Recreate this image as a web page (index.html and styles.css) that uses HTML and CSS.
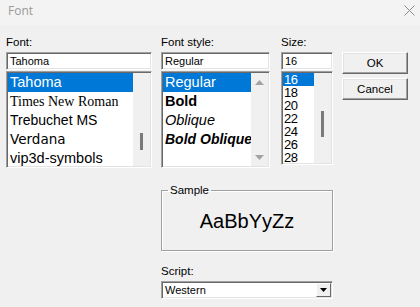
FILE: index.html
```html
<!DOCTYPE html>
<html lang="en">
<head>
  <meta charset="UTF-8" />
  <title>Font</title>
  <link rel="stylesheet" href="styles.css">
</head>
<body>
  <div class="titlebar">
    <span class="title">Font</span>
    <svg class="close" width="11" height="11" viewBox="0 0 11 11">
      <path d="M0.5 0.5 L10.5 10.5 M10.5 0.5 L0.5 10.5" stroke="#8c8c8c" stroke-width="1" fill="none" />
    </svg>
  </div>

  <div class="dialog">
    <div class="top">
      <div class="col col-font">
        <div class="label">Font:</div>
        <div class="edit sunken">Tahoma</div>
        <div class="list sunken">
          <ul class="items">
            <li class="sel f-tahoma">Tahoma</li>
            <li class="f-times">Times New Roman</li>
            <li class="f-trebuchet">Trebuchet MS</li>
            <li class="f-verdana">Verdana</li>
            <li class="f-tahoma">vip3d-symbols</li>
          </ul>
          <div class="scroll">
            <div class="thumb thumb-font"></div>
          </div>
        </div>
      </div>

      <div class="col col-style">
        <div class="label">Font style:</div>
        <div class="edit sunken">Regular</div>
        <div class="list sunken">
          <ul class="items style-items">
            <li class="sel">Regular</li>
            <li class="bold">Bold</li>
            <li class="oblique">Oblique</li>
            <li class="bold oblique">Bold Oblique</li>
          </ul>
          <div class="scroll scroll-arrows">
            <svg width="9" height="5" viewBox="0 0 9 5"><path d="M0 5 L4.5 0 L9 5 Z" fill="#a3a3a3" /></svg>
            <svg width="9" height="5" viewBox="0 0 9 5"><path d="M0 0 L9 0 L4.5 5 Z" fill="#a3a3a3" /></svg>
          </div>
        </div>
      </div>

      <div class="col col-size">
        <div class="label">Size:</div>
        <div class="edit sunken">16</div>
        <div class="list list-size sunken">
          <ul class="items size-items">
            <li class="sel">16</li>
            <li>18</li>
            <li>20</li>
            <li>22</li>
            <li>24</li>
            <li>26</li>
            <li>28</li>
          </ul>
          <div class="scroll">
            <div class="thumb thumb-size"></div>
          </div>
        </div>
      </div>

      <div class="buttons">
        <button class="btn">OK</button>
        <button class="btn">Cancel</button>
      </div>
    </div>

    <div class="bottom">
      <fieldset class="sample">
        <legend>Sample</legend>
        <div class="sample-text">AaBbYyZz</div>
      </fieldset>
      <div class="label script-label">Script:</div>
      <div class="combo sunken">
        <span class="combo-text">Western</span>
        <span class="drop">
          <svg width="7" height="4" viewBox="0 0 7 4"><path d="M0 0 L7 0 L3.5 4 Z" fill="#000" /></svg>
        </span>
      </div>
    </div>
  </div>
</body>
</html>
```

FILE: styles.css
```css
body {
  margin: 0;
  width: 420px;
  height: 307px;
  overflow: hidden;
  background: #f0f0f0;
  color: #000;
  font-family: 'Liberation Sans', Arial, sans-serif;
  font-size: 11px;
}
.titlebar {
  height: 25px;
  background: #f3f3f3;
  display: flex;
  align-items: center;
  justify-content: space-between;
  padding: 0 5px 4px 8px;
  box-sizing: border-box;
}
.title {
  color: #9a9a9a;
  font-family: 'Open Sans', sans-serif;
  font-size: 12px;
}
.dialog {
  padding: 10px 6px 0 6px;
}
.top {
  display: flex;
  align-items: flex-start;
}
.col-font { width: 146px; }
.col-style { width: 109px; margin-left: 9px; }
.col-size { width: 52px; margin-left: 11px; }
.buttons {
  width: 66px;
  margin-left: 9px;
  margin-top: 17px;
  display: flex;
  flex-direction: column;
  gap: 4px;
}
.label {
  height: 17px;
  line-height: 14px;
  font-size: 11.5px;
}
.sunken {
  box-sizing: border-box;
  border: 1px solid;
  border-color: #a0a0a0 #fff #fff #a0a0a0;
  box-shadow: inset 1px 1px #696969, inset -1px -1px #e3e3e3;
  background: #fff;
}
.edit {
  height: 18px;
  padding: 1px 3px;
  line-height: 15px;
}
.list {
  margin-top: 1px;
  height: 97px;
  padding: 1px;
  display: flex;
  overflow: hidden;
}
.list-size { height: 94px; }
.items {
  list-style: none;
  margin: 0;
  padding: 0;
  flex: 1;
  overflow: hidden;
}
.items li {
  height: 19px;
  line-height: 19px;
  padding-left: 2px;
  font-size: 14px;
  white-space: nowrap;
}
.items li.sel {
  background: #0078d7;
  color: #fff;
}
.f-tahoma { font-family: 'Liberation Sans', sans-serif; font-size: 14.5px !important; }
.f-times { font-family: 'Liberation Serif', serif; }
.f-trebuchet { font-family: 'Liberation Sans', sans-serif; }
.f-verdana { font-family: 'DejaVu Sans', sans-serif; font-size: 13.5px !important; }
.style-items li { font-size: 14.5px; }
.bold { font-weight: bold; }
.oblique { font-style: italic; }
.style-items li.bold.oblique { font-size: 14px; }
.size-items li {
  height: 13px;
  line-height: 13px;
  font-size: 13px;
  padding-left: 1px;
  letter-spacing: -0.4px;
}
.scroll {
  width: 17px;
  background: #f0f0f0;
  position: relative;
}
.thumb {
  position: absolute;
  left: 7px;
  width: 3px;
  background: #7a7a7a;
}
.thumb-font { top: 60px; height: 17px; }
.thumb-size { top: 38px; height: 26px; }
.scroll-arrows {
  display: flex;
  flex-direction: column;
  align-items: center;
  justify-content: space-between;
  padding: 7px 0 6px;
  box-sizing: border-box;
}
.btn {
  height: 22px;
  margin: 0;
  padding: 0;
  font-family: inherit;
  font-size: 11.5px;
  color: #000;
  background: #f0f0f0;
  border: 1px solid;
  border-color: #fff #696969 #696969 #fff;
  box-shadow: inset -1px -1px #a0a0a0, inset 1px 1px #e3e3e3;
}
.bottom {
  margin-left: 155px;
  width: 172px;
  margin-top: 15px;
}
.sample {
  margin: 0;
  padding: 0;
  min-width: 0;
  height: 68px;
  box-sizing: border-box;
  border: 1px solid #a0a0a0;
  box-shadow: 1px 1px #fff, inset 1px 1px #fff;
}
.sample legend {
  margin-left: 6px;
  padding: 0 2px;
  line-height: 14px;
  font-size: 11.5px;
}
.sample-text {
  text-align: center;
  font-size: 20px;
  line-height: 24px;
  margin-top: 12px;
}
.script-label {
  margin-top: 13px;
}
.combo {
  height: 18px;
  padding: 1px 1px 1px 3px;
  display: flex;
  align-items: center;
  justify-content: space-between;
  line-height: 15px;
}
.drop {
  width: 15px;
  height: 14px;
  box-sizing: border-box;
  background: #f0f0f0;
  border: 1px solid;
  border-color: #fff #696969 #696969 #fff;
  display: flex;
  align-items: center;
  justify-content: center;
}
```
